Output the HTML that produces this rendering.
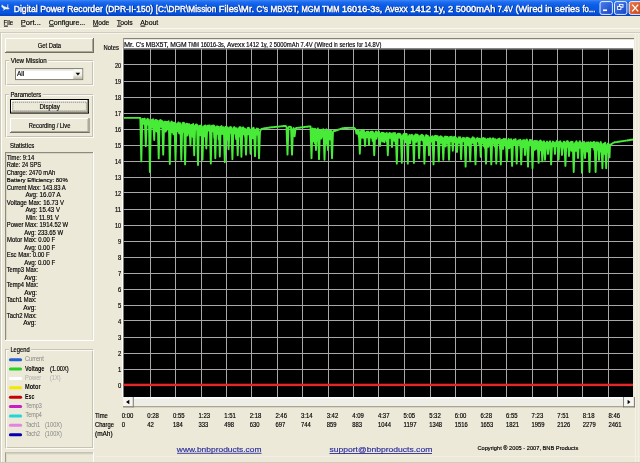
<!DOCTYPE html>
<html><head><meta charset="utf-8"><title>Digital Power Recorder</title>
<style>
html,body{margin:0;padding:0;background:#ECE9D8;overflow:hidden;}
svg{display:block;font-family:"Liberation Sans", sans-serif;will-change:transform;}
</style></head><body>
<svg width="640" height="463" viewBox="0 0 640 463">
<rect x="0" y="0" width="640" height="463" fill="#ECE9D8"/>
<defs>
<linearGradient id="tb" x1="0" y1="0" x2="0" y2="1">
<stop offset="0" stop-color="#3D86F5"/>
<stop offset="0.12" stop-color="#1E6CF0"/>
<stop offset="0.35" stop-color="#0A5CE6"/>
<stop offset="0.8" stop-color="#0756DE"/>
<stop offset="1" stop-color="#0440C0"/>
</linearGradient>
<linearGradient id="bb" x1="0" y1="0" x2="1" y2="1">
<stop offset="0" stop-color="#4A7FF0"/>
<stop offset="1" stop-color="#1442C0"/>
</linearGradient>
<linearGradient id="cb" x1="0" y1="0" x2="1" y2="1">
<stop offset="0" stop-color="#EE7A50"/>
<stop offset="1" stop-color="#C8400F"/>
</linearGradient>
</defs>
<rect x="0" y="0" width="640" height="16" fill="url(#tb)"/>
<path d="M1.9,4.3 L3.8,6.1 L7.1,7.3 L7.3,4.0 L8.3,4.3 L8.4,7.6 L9.9,8.7 L8.1,9.4 L5.6,9.3 L2.2,11.3 L3.7,8.9 L1.1,6.6 Z" fill="#F4F6FF" stroke="#0A2A90" stroke-width="0.4" stroke-opacity="0.6"/>
<text x="14.45" y="12.20" font-size="8.6" fill="#0A2480" textLength="89.25" lengthAdjust="spacingAndGlyphs" stroke="#0A2480" stroke-width="0.4">Digital Power Recorder</text>
<text x="106.20" y="12.20" font-size="8.6" fill="#0A2480" textLength="47.80" lengthAdjust="spacingAndGlyphs" stroke="#0A2480" stroke-width="0.4">(DPR-II-150)</text>
<text x="156.50" y="12.20" font-size="8.6" fill="#0A2480" textLength="60.60" lengthAdjust="spacingAndGlyphs" stroke="#0A2480" stroke-width="0.4">[C:\DPR\Mission</text>
<text x="219.60" y="12.20" font-size="8.6" fill="#0A2480" textLength="35.30" lengthAdjust="spacingAndGlyphs" stroke="#0A2480" stroke-width="0.4">Files\Mr.</text>
<text x="257.40" y="12.20" font-size="8.6" fill="#0A2480" textLength="42.40" lengthAdjust="spacingAndGlyphs" stroke="#0A2480" stroke-width="0.4">C's MBX5T,</text>
<text x="302.30" y="12.20" font-size="8.6" fill="#0A2480" textLength="38.00" lengthAdjust="spacingAndGlyphs" stroke="#0A2480" stroke-width="0.4">MGM TMM</text>
<text x="342.80" y="12.20" font-size="8.6" fill="#0A2480" textLength="40.40" lengthAdjust="spacingAndGlyphs" stroke="#0A2480" stroke-width="0.4">16016-3s,</text>
<text x="385.70" y="12.20" font-size="8.6" fill="#0A2480" textLength="22.80" lengthAdjust="spacingAndGlyphs" stroke="#0A2480" stroke-width="0.4">Avexx</text>
<text x="411.00" y="12.20" font-size="8.6" fill="#0A2480" textLength="43.00" lengthAdjust="spacingAndGlyphs" stroke="#0A2480" stroke-width="0.4">1412 1y, 2</text>
<text x="456.50" y="12.20" font-size="8.6" fill="#0A2480" textLength="39.60" lengthAdjust="spacingAndGlyphs" stroke="#0A2480" stroke-width="0.4">5000mAh</text>
<text x="498.60" y="12.20" font-size="8.6" fill="#0A2480" textLength="15.10" lengthAdjust="spacingAndGlyphs" stroke="#0A2480" stroke-width="0.4">7.4V</text>
<text x="516.20" y="12.20" font-size="8.6" fill="#0A2480" textLength="64.50" lengthAdjust="spacingAndGlyphs" stroke="#0A2480" stroke-width="0.4">(Wired in series</text>
<text x="583.20" y="12.20" font-size="8.6" fill="#0A2480" textLength="13.00" lengthAdjust="spacingAndGlyphs" stroke="#0A2480" stroke-width="0.4">fo...</text>
<text x="13.65" y="11.50" font-size="8.6" fill="#FFFFFF" textLength="89.25" lengthAdjust="spacingAndGlyphs" stroke="#FFFFFF" stroke-width="0.4">Digital Power Recorder</text>
<text x="105.40" y="11.50" font-size="8.6" fill="#FFFFFF" textLength="47.80" lengthAdjust="spacingAndGlyphs" stroke="#FFFFFF" stroke-width="0.4">(DPR-II-150)</text>
<text x="155.70" y="11.50" font-size="8.6" fill="#FFFFFF" textLength="60.60" lengthAdjust="spacingAndGlyphs" stroke="#FFFFFF" stroke-width="0.4">[C:\DPR\Mission</text>
<text x="218.80" y="11.50" font-size="8.6" fill="#FFFFFF" textLength="35.30" lengthAdjust="spacingAndGlyphs" stroke="#FFFFFF" stroke-width="0.4">Files\Mr.</text>
<text x="256.60" y="11.50" font-size="8.6" fill="#FFFFFF" textLength="42.40" lengthAdjust="spacingAndGlyphs" stroke="#FFFFFF" stroke-width="0.4">C's MBX5T,</text>
<text x="301.50" y="11.50" font-size="8.6" fill="#FFFFFF" textLength="38.00" lengthAdjust="spacingAndGlyphs" stroke="#FFFFFF" stroke-width="0.4">MGM TMM</text>
<text x="342.00" y="11.50" font-size="8.6" fill="#FFFFFF" textLength="40.40" lengthAdjust="spacingAndGlyphs" stroke="#FFFFFF" stroke-width="0.4">16016-3s,</text>
<text x="384.90" y="11.50" font-size="8.6" fill="#FFFFFF" textLength="22.80" lengthAdjust="spacingAndGlyphs" stroke="#FFFFFF" stroke-width="0.4">Avexx</text>
<text x="410.20" y="11.50" font-size="8.6" fill="#FFFFFF" textLength="43.00" lengthAdjust="spacingAndGlyphs" stroke="#FFFFFF" stroke-width="0.4">1412 1y, 2</text>
<text x="455.70" y="11.50" font-size="8.6" fill="#FFFFFF" textLength="39.60" lengthAdjust="spacingAndGlyphs" stroke="#FFFFFF" stroke-width="0.4">5000mAh</text>
<text x="497.80" y="11.50" font-size="8.6" fill="#FFFFFF" textLength="15.10" lengthAdjust="spacingAndGlyphs" stroke="#FFFFFF" stroke-width="0.4">7.4V</text>
<text x="515.40" y="11.50" font-size="8.6" fill="#FFFFFF" textLength="64.50" lengthAdjust="spacingAndGlyphs" stroke="#FFFFFF" stroke-width="0.4">(Wired in series</text>
<text x="582.40" y="11.50" font-size="8.6" fill="#FFFFFF" textLength="13.00" lengthAdjust="spacingAndGlyphs" stroke="#FFFFFF" stroke-width="0.4">fo...</text>
<rect x="600" y="1.6" width="12.4" height="12.8" rx="2" fill="url(#bb)" stroke="#FFFFFF" stroke-width="0.9"/>
<rect x="614.5" y="1.6" width="12.4" height="12.8" rx="2" fill="url(#bb)" stroke="#FFFFFF" stroke-width="0.9"/>
<rect x="603" y="9.4" width="4" height="1.7" fill="#FFFFFF"/>
<rect x="619.4" y="4.4" width="3.6" height="2.8" fill="none" stroke="#FFFFFF" stroke-width="0.9"/>
<rect x="617.6" y="6.4" width="3.3" height="3.0" fill="#1E50CC" stroke="#FFFFFF" stroke-width="0.9"/>
<rect x="629.2" y="1.6" width="13" height="12.8" rx="2" fill="url(#cb)" stroke="#FFFFFF" stroke-width="0.9"/>
<path d="M632.2,4.6 L638.2,11.4 M638.2,4.6 L632.2,11.4" stroke="#FFFFFF" stroke-width="1.4"/>
<rect x="0" y="16" width="640" height="13" fill="#ECE9D8"/>
<rect x="0" y="28" width="640" height="1" fill="#F8F7F2"/>
<text x="3.60" y="24.60" font-size="7.6" fill="#000" textLength="9.60" lengthAdjust="spacingAndGlyphs" stroke="#000" stroke-width="0.16">File</text>
<rect x="3.9" y="25.6" width="4.0" height="1" fill="#000"/>
<text x="20.80" y="24.60" font-size="7.6" fill="#000" textLength="20.10" lengthAdjust="spacingAndGlyphs" stroke="#000" stroke-width="0.16">Port...</text>
<rect x="21.1" y="25.6" width="4.600000000000001" height="1" fill="#000"/>
<text x="48.70" y="24.60" font-size="7.6" fill="#000" textLength="36.60" lengthAdjust="spacingAndGlyphs" stroke="#000" stroke-width="0.16">Configure...</text>
<rect x="49" y="25.6" width="5.0" height="1" fill="#000"/>
<text x="92.70" y="24.60" font-size="7.6" fill="#000" textLength="16.60" lengthAdjust="spacingAndGlyphs" stroke="#000" stroke-width="0.16">Mode</text>
<rect x="93" y="25.6" width="5.400000000000006" height="1" fill="#000"/>
<text x="116.70" y="24.60" font-size="7.6" fill="#000" textLength="16.10" lengthAdjust="spacingAndGlyphs" stroke="#000" stroke-width="0.16">Tools</text>
<rect x="117" y="25.6" width="4.400000000000006" height="1" fill="#000"/>
<text x="140.20" y="24.60" font-size="7.6" fill="#000" textLength="18.10" lengthAdjust="spacingAndGlyphs" stroke="#000" stroke-width="0.16">About</text>
<rect x="140.5" y="25.6" width="4.800000000000011" height="1" fill="#000"/>
<rect x="0" y="32" width="640" height="1" fill="#D0CDBE"/>
<rect x="0" y="33" width="640" height="1" fill="#F6F4EC"/>
<rect x="0" y="32" width="1" height="431" fill="#CFCBBB"/>
<rect x="1" y="33" width="1" height="430" fill="#FFFFFF"/>
<rect x="635" y="33" width="1" height="430" fill="#F4F2E8"/>
<rect x="638" y="33" width="1" height="430" fill="#F2F0E6"/>
<rect x="5" y="38" width="89" height="15" fill="#ECE9D8"/>
<rect x="5" y="38" width="89" height="1" fill="#FFFFFF"/>
<rect x="5" y="38" width="1" height="15" fill="#FFFFFF"/>
<rect x="5" y="52" width="89" height="1" fill="#716F64"/>
<rect x="93" y="38" width="1" height="15" fill="#716F64"/>
<rect x="6" y="51" width="87" height="1" fill="#ACA899"/>
<rect x="92" y="39" width="1" height="13" fill="#ACA899"/>
<text x="37.80" y="47.50" font-size="6.4" fill="#000" textLength="23.30" lengthAdjust="spacingAndGlyphs" stroke="#000" stroke-width="0.16">Get Data</text>
<rect x="5.5" y="60.5" width="87" height="24" fill="none" stroke="#C6C3B4" stroke-width="1"/>
<rect x="6.5" y="61.5" width="87" height="24" fill="none" stroke="#FFFFFF" stroke-width="1" opacity="0.8"/>
<rect x="9.3" y="57" width="38.9" height="6" fill="#ECE9D8"/>
<text x="10.80" y="63.40" font-size="6.4" fill="#000" textLength="35.90" lengthAdjust="spacingAndGlyphs" stroke="#000" stroke-width="0.16">View Mission</text>
<rect x="15" y="68" width="68" height="12" fill="#FFFFFF"/>
<rect x="15.5" y="68.6" width="67.2" height="11.0" fill="none" stroke="#7E7B6E" stroke-width="1"/>
<rect x="16" y="69.6" width="66" height="0.8" fill="#D4D1C4"/>
<linearGradient id="cbtn" x1="0" y1="0" x2="0" y2="1"><stop offset="0" stop-color="#FAFAF6"/><stop offset="0.6" stop-color="#F0EFE8"/><stop offset="1" stop-color="#B8B5A6"/></linearGradient>
<rect x="73.3" y="69.3" width="8.9" height="9.8" fill="url(#cbtn)"/>
<path d="M75.6,72.8 L80.2,72.8 L77.9,75.6 Z" fill="#000"/>
<text x="16.90" y="76.30" font-size="6.4" fill="#000" textLength="7.30" lengthAdjust="spacingAndGlyphs" stroke="#000" stroke-width="0.16">All</text>
<rect x="5.5" y="94.5" width="87" height="42" fill="none" stroke="#C6C3B4" stroke-width="1"/>
<rect x="6.5" y="95.5" width="87" height="42" fill="none" stroke="#FFFFFF" stroke-width="1" opacity="0.8"/>
<rect x="8.9" y="91" width="33.8" height="6" fill="#ECE9D8"/>
<text x="10.40" y="97.20" font-size="6.4" fill="#000" textLength="30.80" lengthAdjust="spacingAndGlyphs" stroke="#000" stroke-width="0.16">Parameters</text>
<rect x="10" y="99" width="79" height="14" fill="#ECE9D8"/>
<rect x="10.5" y="99.5" width="78" height="13.6" fill="none" stroke="#000" stroke-width="1"/>
<rect x="11" y="100.2" width="77" height="1" fill="#FFFFFF"/>
<rect x="11.2" y="100" width="1" height="12" fill="#FFFFFF"/>
<rect x="11" y="111.6" width="77" height="1" fill="#716F64"/>
<rect x="87.3" y="100" width="1" height="12" fill="#716F64"/>
<rect x="12.8" y="102.2" width="73.6" height="8.6" fill="none" stroke="#333" stroke-width="0.6" stroke-dasharray="1,1"/>
<text x="39.60" y="109.00" font-size="6.4" fill="#000" textLength="20.20" lengthAdjust="spacingAndGlyphs" stroke="#000" stroke-width="0.16">Display</text>
<rect x="10" y="118" width="79.5" height="15" fill="#ECE9D8"/>
<rect x="10" y="118" width="79.5" height="1" fill="#FFFFFF"/>
<rect x="10" y="118" width="1" height="15" fill="#FFFFFF"/>
<rect x="10" y="132" width="79.5" height="1" fill="#716F64"/>
<rect x="88.5" y="118" width="1" height="15" fill="#716F64"/>
<rect x="11" y="131" width="77.5" height="1" fill="#ACA899"/>
<rect x="87.5" y="119" width="1" height="13" fill="#ACA899"/>
<text x="28.70" y="128.30" font-size="6.4" fill="#000" textLength="41.80" lengthAdjust="spacingAndGlyphs" stroke="#000" stroke-width="0.16">Recording / Live</text>
<text x="10.00" y="147.90" font-size="6.4" fill="#000" textLength="24.20" lengthAdjust="spacingAndGlyphs" stroke="#000" stroke-width="0.16">Statistics</text>
<rect x="5" y="152" width="89" height="1" fill="#8E8B7C"/>
<rect x="5" y="152" width="1" height="188" fill="#8E8B7C"/>
<rect x="6" y="153" width="87" height="1" fill="#D8D5C8"/>
<rect x="6" y="153" width="1" height="186" fill="#D8D5C8"/>
<rect x="5" y="340" width="89" height="1" fill="#FFFFFF"/>
<rect x="93" y="152" width="1" height="189" fill="#FFFFFF"/>
<rect x="92" y="153" width="1" height="187" fill="#E2DFD2"/>
<text x="7.00" y="159.80" font-size="6.4" fill="#000" textLength="27.10" lengthAdjust="spacingAndGlyphs" stroke="#000" stroke-width="0.16">Time: 9:14</text>
<text x="6.80" y="167.31" font-size="6.4" fill="#000" textLength="34.30" lengthAdjust="spacingAndGlyphs" stroke="#000" stroke-width="0.16">Rate: 24 SPS</text>
<text x="6.80" y="174.82" font-size="6.4" fill="#000" textLength="48.40" lengthAdjust="spacingAndGlyphs" stroke="#000" stroke-width="0.16">Charge: 2470 mAh</text>
<text x="6.80" y="182.33" font-size="6.0" fill="#000" textLength="60.90" lengthAdjust="spacingAndGlyphs" stroke="#000" stroke-width="0.16">Battery Efficiency: 80%</text>
<text x="6.80" y="189.84" font-size="6.4" fill="#000" textLength="59.00" lengthAdjust="spacingAndGlyphs" stroke="#000" stroke-width="0.16">Current Max: 143.83 A</text>
<text x="25.40" y="197.35" font-size="6.4" fill="#000" textLength="35.40" lengthAdjust="spacingAndGlyphs" stroke="#000" stroke-width="0.16">Avg: 16.07 A</text>
<text x="6.80" y="204.86" font-size="6.4" fill="#000" textLength="57.15" lengthAdjust="spacingAndGlyphs" stroke="#000" stroke-width="0.16">Voltage Max: 16.73 V</text>
<text x="25.40" y="212.37" font-size="6.4" fill="#000" textLength="34.55" lengthAdjust="spacingAndGlyphs" stroke="#000" stroke-width="0.16">Avg: 15.43 V</text>
<text x="26.05" y="219.88" font-size="6.4" fill="#000" textLength="32.90" lengthAdjust="spacingAndGlyphs" stroke="#000" stroke-width="0.16">Min: 11.91 V</text>
<text x="6.70" y="227.39" font-size="6.4" fill="#000" textLength="61.50" lengthAdjust="spacingAndGlyphs" stroke="#000" stroke-width="0.16">Power Max: 1914.52 W</text>
<text x="24.20" y="234.90" font-size="6.4" fill="#000" textLength="39.00" lengthAdjust="spacingAndGlyphs" stroke="#000" stroke-width="0.16">Avg: 233.65 W</text>
<text x="7.05" y="242.41" font-size="6.4" fill="#000" textLength="48.15" lengthAdjust="spacingAndGlyphs" stroke="#000" stroke-width="0.16">Motor Max: 0.00 F</text>
<text x="24.20" y="249.92" font-size="6.4" fill="#000" textLength="31.00" lengthAdjust="spacingAndGlyphs" stroke="#000" stroke-width="0.16">Avg: 0.00 F</text>
<text x="6.70" y="257.43" font-size="6.4" fill="#000" textLength="42.90" lengthAdjust="spacingAndGlyphs" stroke="#000" stroke-width="0.16">Esc Max: 0.00 F</text>
<text x="24.20" y="264.94" font-size="6.4" fill="#000" textLength="31.00" lengthAdjust="spacingAndGlyphs" stroke="#000" stroke-width="0.16">Avg: 0.00 F</text>
<text x="6.70" y="272.45" font-size="6.4" fill="#000" textLength="31.50" lengthAdjust="spacingAndGlyphs" stroke="#000" stroke-width="0.16">Temp3 Max:</text>
<text x="24.20" y="279.96" font-size="6.4" fill="#000" textLength="12.90" lengthAdjust="spacingAndGlyphs" stroke="#000" stroke-width="0.16">Avg:</text>
<text x="6.70" y="287.47" font-size="6.4" fill="#000" textLength="31.50" lengthAdjust="spacingAndGlyphs" stroke="#000" stroke-width="0.16">Temp4 Max:</text>
<text x="24.20" y="294.98" font-size="6.4" fill="#000" textLength="12.90" lengthAdjust="spacingAndGlyphs" stroke="#000" stroke-width="0.16">Avg:</text>
<text x="6.70" y="302.49" font-size="6.4" fill="#000" textLength="29.75" lengthAdjust="spacingAndGlyphs" stroke="#000" stroke-width="0.16">Tach1 Max:</text>
<text x="23.20" y="310.00" font-size="6.4" fill="#000" textLength="12.90" lengthAdjust="spacingAndGlyphs" stroke="#000" stroke-width="0.16">Avg:</text>
<text x="6.80" y="317.51" font-size="6.4" fill="#000" textLength="29.90" lengthAdjust="spacingAndGlyphs" stroke="#000" stroke-width="0.16">Tach2 Max:</text>
<text x="23.20" y="325.02" font-size="6.4" fill="#000" textLength="12.90" lengthAdjust="spacingAndGlyphs" stroke="#000" stroke-width="0.16">Avg:</text>
<rect x="5.5" y="349.5" width="87" height="98" fill="none" stroke="#C6C3B4" stroke-width="1"/>
<rect x="6.5" y="350.5" width="87" height="98" fill="none" stroke="#FFFFFF" stroke-width="1" opacity="0.8"/>
<rect x="8.9" y="346" width="22.2" height="6" fill="#ECE9D8"/>
<text x="10.40" y="351.70" font-size="6.4" fill="#000" textLength="19.20" lengthAdjust="spacingAndGlyphs" stroke="#000" stroke-width="0.16">Legend</text>
<rect x="8.9" y="358.20" width="13.2" height="3.0" rx="1.5" fill="#2262D2"/>
<text x="25.00" y="361.30" font-size="6.4" fill="#828282" textLength="18.75" lengthAdjust="spacingAndGlyphs">Current</text>
<rect x="8.9" y="367.58" width="13.2" height="3.0" rx="1.5" fill="#28D028"/>
<text x="25.00" y="370.63" font-size="6.4" fill="#000" font-weight="bold" textLength="19.40" lengthAdjust="spacingAndGlyphs">Voltage</text>
<text x="50.00" y="370.63" font-size="6.4" fill="#000" textLength="18.75" lengthAdjust="spacingAndGlyphs" stroke="#000" stroke-width="0.16">(1.00X)</text>
<rect x="8.9" y="376.96" width="13.2" height="3.0" rx="1.5" fill="#FFFFFF"/>
<text x="25.00" y="379.96" font-size="6.4" fill="#ACACAC" textLength="16.25" lengthAdjust="spacingAndGlyphs">Power</text>
<text x="50.00" y="379.96" font-size="6.4" fill="#ACACAC" textLength="10.60" lengthAdjust="spacingAndGlyphs">(1X)</text>
<rect x="8.9" y="386.34" width="13.2" height="3.0" rx="1.5" fill="#F5E800"/>
<text x="25.00" y="389.29" font-size="6.4" fill="#000" font-weight="bold" textLength="15.60" lengthAdjust="spacingAndGlyphs">Motor</text>
<rect x="8.9" y="395.72" width="13.2" height="3.0" rx="1.5" fill="#C80000"/>
<text x="25.00" y="398.62" font-size="6.4" fill="#000" font-weight="bold" textLength="9.40" lengthAdjust="spacingAndGlyphs">Esc</text>
<rect x="8.9" y="405.10" width="13.2" height="3.0" rx="1.5" fill="#C81EC8"/>
<text x="25.60" y="407.95" font-size="6.4" fill="#828282" textLength="16.30" lengthAdjust="spacingAndGlyphs">Temp3</text>
<rect x="8.9" y="414.48" width="13.2" height="3.0" rx="1.5" fill="#1ED8D8"/>
<text x="25.60" y="417.28" font-size="6.4" fill="#828282" textLength="16.30" lengthAdjust="spacingAndGlyphs">Temp4</text>
<rect x="8.9" y="423.86" width="13.2" height="3.0" rx="1.5" fill="#E284E2"/>
<text x="25.60" y="426.61" font-size="6.4" fill="#828282" textLength="14.40" lengthAdjust="spacingAndGlyphs">Tach1</text>
<text x="45.00" y="426.61" font-size="6.4" fill="#828282" textLength="16.90" lengthAdjust="spacingAndGlyphs">(100X)</text>
<rect x="8.9" y="433.24" width="13.2" height="3.0" rx="1.5" fill="#0000B0"/>
<text x="25.60" y="435.94" font-size="6.4" fill="#828282" textLength="14.40" lengthAdjust="spacingAndGlyphs">Tach2</text>
<text x="45.00" y="435.94" font-size="6.4" fill="#828282" textLength="16.90" lengthAdjust="spacingAndGlyphs">(100X)</text>
<rect x="5" y="452.5" width="89" height="1" fill="#A09D8E"/>
<rect x="5" y="452.5" width="1" height="10.5" fill="#A09D8E"/>
<rect x="6" y="453.5" width="87" height="1" fill="#DEDBCE"/>
<rect x="6" y="453.5" width="1" height="9.5" fill="#DEDBCE"/>
<rect x="93" y="452" width="1" height="11" fill="#FFFFFF"/>
<text x="103.60" y="49.90" font-size="6.6" fill="#000" textLength="15.30" lengthAdjust="spacingAndGlyphs" stroke="#000" stroke-width="0.16">Notes</text>
<rect x="123" y="38" width="511" height="10.5" fill="#FFFFFF"/>
<rect x="123" y="38" width="511" height="1.2" fill="#858274"/>
<rect x="123" y="38" width="1" height="10.5" fill="#9A978A"/>
<text x="124.00" y="46.50" font-size="6.4" fill="#000" textLength="10.15" lengthAdjust="spacingAndGlyphs" stroke="#000" stroke-width="0.16">Mr.</text>
<text x="135.85" y="46.50" font-size="6.4" fill="#000" textLength="8.30" lengthAdjust="spacingAndGlyphs" stroke="#000" stroke-width="0.16">C's</text>
<text x="145.85" y="46.50" font-size="6.4" fill="#000" textLength="22.65" lengthAdjust="spacingAndGlyphs" stroke="#000" stroke-width="0.16">MBX5T,</text>
<text x="170.20" y="46.50" font-size="6.4" fill="#000" textLength="16.45" lengthAdjust="spacingAndGlyphs" stroke="#000" stroke-width="0.16">MGM</text>
<text x="188.35" y="46.50" font-size="6.4" fill="#000" textLength="10.65" lengthAdjust="spacingAndGlyphs" stroke="#000" stroke-width="0.16">TMM</text>
<text x="200.70" y="46.50" font-size="6.4" fill="#000" textLength="24.60" lengthAdjust="spacingAndGlyphs" stroke="#000" stroke-width="0.16">16016-3s,</text>
<text x="227.00" y="46.50" font-size="6.4" fill="#000" textLength="17.65" lengthAdjust="spacingAndGlyphs" stroke="#000" stroke-width="0.16">Avexx</text>
<text x="246.35" y="46.50" font-size="6.4" fill="#000" textLength="12.65" lengthAdjust="spacingAndGlyphs" stroke="#000" stroke-width="0.16">1412</text>
<text x="260.70" y="46.50" font-size="6.4" fill="#000" textLength="7.10" lengthAdjust="spacingAndGlyphs" stroke="#000" stroke-width="0.16">1y,</text>
<text x="269.50" y="46.50" font-size="6.4" fill="#000" textLength="2.65" lengthAdjust="spacingAndGlyphs" stroke="#000" stroke-width="0.16">2</text>
<text x="273.85" y="46.50" font-size="6.4" fill="#000" textLength="25.05" lengthAdjust="spacingAndGlyphs" stroke="#000" stroke-width="0.16">5000mAh</text>
<text x="300.60" y="46.50" font-size="6.4" fill="#000" textLength="12.05" lengthAdjust="spacingAndGlyphs" stroke="#000" stroke-width="0.16">7.4V</text>
<text x="314.35" y="46.50" font-size="6.4" fill="#000" textLength="18.05" lengthAdjust="spacingAndGlyphs" stroke="#000" stroke-width="0.16">(Wired</text>
<text x="334.10" y="46.50" font-size="6.4" fill="#000" textLength="3.60" lengthAdjust="spacingAndGlyphs" stroke="#000" stroke-width="0.16">in</text>
<text x="339.40" y="46.50" font-size="6.4" fill="#000" textLength="15.90" lengthAdjust="spacingAndGlyphs" stroke="#000" stroke-width="0.16">series</text>
<text x="357.00" y="46.50" font-size="6.4" fill="#000" textLength="5.80" lengthAdjust="spacingAndGlyphs" stroke="#000" stroke-width="0.16">for</text>
<text x="364.50" y="46.50" font-size="6.4" fill="#000" textLength="16.90" lengthAdjust="spacingAndGlyphs" stroke="#000" stroke-width="0.16">14.8V)</text>
<rect x="122" y="48.5" width="1.5" height="348.5" fill="#FFFFFF"/>
<rect x="123.5" y="48.5" width="509.5" height="348.5" fill="#000000"/>
<rect x="123.5" y="48.3" width="509.5" height="1.3" fill="#8E8E8E"/>
<path d="M123.5,384.50H633 M123.5,369.50H633 M123.5,353.50H633 M123.5,337.50H633 M123.5,320.50H633 M123.5,305.50H633 M123.5,289.50H633 M123.5,273.50H633 M123.5,257.50H633 M123.5,241.50H633 M123.5,225.50H633 M123.5,209.50H633 M123.5,192.50H633 M123.5,177.50H633 M123.5,161.50H633 M123.5,145.50H633 M123.5,129.50H633 M123.5,113.50H633 M123.5,97.50H633 M123.5,81.50H633 M123.5,64.50H633 M150.50,48.5V397 M175.50,48.5V397 M201.50,48.5V397 M226.50,48.5V397 M251.50,48.5V397 M277.50,48.5V397 M302.50,48.5V397 M328.50,48.5V397 M353.50,48.5V397 M378.50,48.5V397 M404.50,48.5V397 M430.50,48.5V397 M455.50,48.5V397 M481.50,48.5V397 M506.50,48.5V397 M532.50,48.5V397 M557.50,48.5V397 M582.50,48.5V397 M608.50,48.5V397" stroke="#A8A8A8" stroke-width="1" fill="none"/>
<text x="121.20" y="387.80" font-size="6.4" fill="#000" text-anchor="end" textLength="3.30" lengthAdjust="spacingAndGlyphs" stroke="#000" stroke-width="0.16">0</text>
<text x="121.20" y="371.80" font-size="6.4" fill="#000" text-anchor="end" textLength="3.30" lengthAdjust="spacingAndGlyphs" stroke="#000" stroke-width="0.16">1</text>
<text x="121.20" y="355.80" font-size="6.4" fill="#000" text-anchor="end" textLength="3.30" lengthAdjust="spacingAndGlyphs" stroke="#000" stroke-width="0.16">2</text>
<text x="121.20" y="339.80" font-size="6.4" fill="#000" text-anchor="end" textLength="3.30" lengthAdjust="spacingAndGlyphs" stroke="#000" stroke-width="0.16">3</text>
<text x="121.20" y="323.80" font-size="6.4" fill="#000" text-anchor="end" textLength="3.30" lengthAdjust="spacingAndGlyphs" stroke="#000" stroke-width="0.16">4</text>
<text x="121.20" y="307.80" font-size="6.4" fill="#000" text-anchor="end" textLength="3.30" lengthAdjust="spacingAndGlyphs" stroke="#000" stroke-width="0.16">5</text>
<text x="121.20" y="291.80" font-size="6.4" fill="#000" text-anchor="end" textLength="3.30" lengthAdjust="spacingAndGlyphs" stroke="#000" stroke-width="0.16">6</text>
<text x="121.20" y="275.80" font-size="6.4" fill="#000" text-anchor="end" textLength="3.30" lengthAdjust="spacingAndGlyphs" stroke="#000" stroke-width="0.16">7</text>
<text x="121.20" y="259.80" font-size="6.4" fill="#000" text-anchor="end" textLength="3.30" lengthAdjust="spacingAndGlyphs" stroke="#000" stroke-width="0.16">8</text>
<text x="121.20" y="243.80" font-size="6.4" fill="#000" text-anchor="end" textLength="3.30" lengthAdjust="spacingAndGlyphs" stroke="#000" stroke-width="0.16">9</text>
<text x="121.20" y="227.80" font-size="6.4" fill="#000" text-anchor="end" textLength="6.20" lengthAdjust="spacingAndGlyphs" stroke="#000" stroke-width="0.16">10</text>
<text x="121.20" y="211.80" font-size="6.4" fill="#000" text-anchor="end" textLength="6.20" lengthAdjust="spacingAndGlyphs" stroke="#000" stroke-width="0.16">11</text>
<text x="121.20" y="195.80" font-size="6.4" fill="#000" text-anchor="end" textLength="6.20" lengthAdjust="spacingAndGlyphs" stroke="#000" stroke-width="0.16">12</text>
<text x="121.20" y="179.80" font-size="6.4" fill="#000" text-anchor="end" textLength="6.20" lengthAdjust="spacingAndGlyphs" stroke="#000" stroke-width="0.16">13</text>
<text x="121.20" y="163.80" font-size="6.4" fill="#000" text-anchor="end" textLength="6.20" lengthAdjust="spacingAndGlyphs" stroke="#000" stroke-width="0.16">14</text>
<text x="121.20" y="147.80" font-size="6.4" fill="#000" text-anchor="end" textLength="6.20" lengthAdjust="spacingAndGlyphs" stroke="#000" stroke-width="0.16">15</text>
<text x="121.20" y="131.80" font-size="6.4" fill="#000" text-anchor="end" textLength="6.20" lengthAdjust="spacingAndGlyphs" stroke="#000" stroke-width="0.16">16</text>
<text x="121.20" y="115.80" font-size="6.4" fill="#000" text-anchor="end" textLength="6.20" lengthAdjust="spacingAndGlyphs" stroke="#000" stroke-width="0.16">17</text>
<text x="121.20" y="99.80" font-size="6.4" fill="#000" text-anchor="end" textLength="6.20" lengthAdjust="spacingAndGlyphs" stroke="#000" stroke-width="0.16">18</text>
<text x="121.20" y="83.80" font-size="6.4" fill="#000" text-anchor="end" textLength="6.20" lengthAdjust="spacingAndGlyphs" stroke="#000" stroke-width="0.16">19</text>
<text x="121.20" y="67.80" font-size="6.4" fill="#000" text-anchor="end" textLength="6.20" lengthAdjust="spacingAndGlyphs" stroke="#000" stroke-width="0.16">20</text>
<path d="M124.0,117.9 L125.0,117.9 L126.0,117.9 L127.0,117.9 L128.0,117.9 L129.0,117.9 L130.0,117.9 L131.0,117.9 L132.0,117.9 L133.0,117.9 L134.0,117.9 L135.0,117.9 L136.0,117.9 L137.0,117.9 L138.0,117.9 L139.0,117.9 L140.0,117.9 L140.3,118.0 L141.3,161.4 L142.3,118.9 L143.1,119.2 L143.7,123.9 L144.3,118.8 L144.9,123.9 L144.8,118.6 L145.8,146.3 L146.8,120.0 L147.6,118.7 L148.2,124.5 L148.7,120.0 L149.3,124.9 L148.9,119.8 L149.9,172.0 L150.9,121.4 L151.7,119.9 L152.3,127.5 L153.1,119.2 L153.7,131.6 L153.2,119.7 L154.2,140.0 L155.2,120.2 L156.0,120.0 L156.6,131.5 L157.0,120.5 L157.6,130.1 L157.7,120.7 L158.7,158.4 L159.7,120.6 L160.5,120.1 L161.1,126.9 L161.7,120.8 L162.3,127.9 L162.2,121.1 L163.2,154.6 L164.2,121.7 L165.0,121.8 L165.6,131.6 L166.0,121.6 L166.6,130.3 L167.4,122.0 L168.0,128.5 L168.7,121.3 L169.3,129.7 L168.8,121.6 L169.8,164.0 L170.8,122.9 L171.6,121.5 L172.2,132.2 L172.9,122.5 L173.5,134.2 L173.9,122.9 L174.5,131.9 L174.5,122.7 L175.5,160.0 L176.5,124.3 L177.3,123.6 L177.9,131.3 L178.5,122.4 L179.1,133.3 L179.8,124.0 L180.4,134.5 L180.3,123.2 L181.3,159.8 L182.3,124.6 L183.1,122.7 L183.7,131.8 L184.1,123.0 L184.7,128.5 L184.1,123.3 L185.1,164.4 L186.1,124.1 L186.9,123.7 L187.5,135.6 L187.8,123.9 L188.4,133.0 L189.2,124.6 L189.8,135.8 L189.4,124.2 L190.4,145.5 L191.4,124.9 L192.2,125.0 L192.8,136.9 L193.2,124.0 L193.8,130.8 L193.2,124.7 L194.2,155.3 L195.2,125.7 L196.0,124.4 L196.6,129.2 L197.0,124.8 L198.0,165.1 L199.0,126.0 L199.8,125.8 L200.4,135.3 L201.0,125.4 L201.6,135.2 L201.5,125.9 L202.5,159.8 L203.5,126.7 L204.3,126.0 L204.9,136.5 L205.3,125.5 L206.3,148.5 L207.3,125.7 L208.1,126.0 L208.7,130.6 L209.0,125.4 L209.6,131.5 L209.8,125.5 L210.8,163.6 L211.8,125.8 L212.6,125.6 L213.2,131.3 L213.7,125.4 L214.3,137.9 L214.3,125.9 L215.3,158.3 L216.3,126.7 L217.1,126.2 L217.7,133.9 L218.1,127.1 L218.7,139.3 L218.8,126.7 L219.8,156.5 L220.8,126.7 L221.6,126.1 L222.2,134.0 L222.6,127.4 L223.2,132.5 L223.5,127.6 L224.1,135.7 L223.8,127.1 L224.8,162.1 L225.8,126.8 L226.6,127.1 L227.2,139.6 L227.6,127.5 L228.6,149.3 L229.6,127.5 L230.4,127.0 L231.0,133.0 L231.4,127.5 L232.4,159.1 L233.4,128.7 L234.2,127.1 L234.8,133.6 L235.5,128.3 L236.1,139.0 L236.7,128.1 L237.7,155.3 L238.7,128.9 L239.5,127.2 L240.1,136.4 L240.4,127.3 L241.4,156.8 L242.4,127.7 L243.2,127.5 L243.8,134.4 L244.4,128.7 L245.0,136.1 L245.0,128.8 L246.0,154.6 L247.0,129.8 L247.8,127.9 L248.4,134.3 L248.8,127.7 L249.4,134.3 L249.5,128.9 L250.5,153.8 L251.5,129.8 L252.3,128.4 L252.9,138.3 L253.6,127.8 L254.2,138.4 L254.0,129.0 L255.0,156.1 L256.0,129.9 L256.8,128.6 L257.4,134.5 L258.0,128.6 L259.0,158.3 L260.0,131.8 L260.8,129.6 L261.8,128.9 L262.8,128.7 L263.8,128.5 L264.8,128.3 L265.8,128.2 L266.8,128.0 L267.8,127.9 L268.8,127.7 L269.8,127.5 L270.8,127.4 L271.8,127.3 L272.8,127.2 L273.8,127.1 L274.8,127.0 L275.8,126.9 L276.8,126.8 L277.8,126.7 L278.8,126.6 L279.8,126.5 L280.8,126.4 L281.8,126.3 L282.8,126.2 L283.8,126.0 L284.8,125.9 L285.8,126.0 L286.5,127.0 L287.5,154.6 L288.5,127.2 L289.3,126.6 L290.3,126.8 L291.0,127.1 L292.0,154.6 L293.0,129.2 L293.6,128.0 L294.6,136.4 L295.6,128.4 L296.4,128.0 L297.4,127.9 L298.4,127.8 L299.4,127.7 L300.4,127.5 L301.4,127.4 L302.4,127.3 L303.4,127.2 L304.4,127.0 L305.4,126.9 L306.4,126.8 L307.4,126.7 L308.4,126.5 L309.4,126.4 L310.4,126.4 L310.5,126.4 L311.5,158.3 L312.5,128.5 L313.3,129.1 L313.9,141.4 L314.3,129.1 L314.9,143.2 L315.0,128.6 L316.0,150.0 L317.0,129.8 L317.8,128.4 L318.4,134.2 L318.0,129.3 L319.0,159.1 L320.0,130.1 L320.8,130.0 L321.4,138.6 L322.1,130.0 L322.7,136.6 L323.2,129.2 L323.8,137.0 L323.5,129.5 L324.5,159.8 L325.5,130.5 L326.3,129.3 L326.9,143.9 L327.0,130.1 L328.0,150.0 L329.0,131.2 L329.8,131.0 L330.4,139.5 L331.0,130.6 L332.0,158.3 L333.0,131.6 L333.8,130.8 L334.8,131.0 L335.8,130.6 L336.8,130.3 L337.8,129.9 L338.8,129.5 L339.8,129.2 L340.8,128.8 L341.8,128.5 L342.8,128.1 L343.8,128.1 L344.8,128.0 L345.8,128.0 L346.8,128.0 L347.8,128.0 L348.8,127.9 L349.8,127.9 L350.8,127.9 L351.8,127.9 L352.8,127.8 L353.8,127.8 L354.8,128.3 L355.8,130.1 L356.4,133.5 L356.9,130.0 L357.5,133.8 L358.2,130.0 L358.8,136.9 L358.8,130.8 L359.8,153.8 L360.8,131.2 L361.6,130.8 L362.2,137.7 L362.9,130.2 L363.5,137.8 L363.9,130.6 L364.5,139.3 L364.0,131.2 L365.0,146.0 L366.0,132.4 L366.8,131.8 L367.4,137.3 L368.0,131.4 L369.0,145.0 L370.0,132.2 L370.8,131.7 L371.4,137.7 L372.0,131.5 L372.6,140.9 L373.2,132.2 L374.2,155.3 L375.2,133.4 L376.0,131.4 L376.6,138.7 L377.4,132.5 L378.0,136.1 L378.3,131.9 L378.9,135.8 L379.0,131.7 L380.0,146.0 L381.0,133.4 L381.8,132.8 L382.4,141.5 L382.8,132.8 L383.4,140.1 L383.7,133.2 L384.3,142.2 L384.8,133.4 L385.4,138.6 L385.9,133.6 L386.5,141.5 L386.8,132.9 L387.8,155.3 L388.8,133.9 L389.6,132.9 L390.2,137.7 L390.7,133.6 L391.3,136.7 L391.0,133.4 L392.0,147.0 L393.0,133.3 L393.8,133.3 L394.4,140.9 L395.0,133.0 L395.6,143.4 L395.8,134.5 L396.8,163.6 L397.8,134.0 L398.6,133.7 L399.2,137.6 L399.9,133.8 L400.5,138.3 L400.8,134.9 L401.8,162.9 L402.8,135.8 L403.6,134.0 L404.2,138.7 L405.0,134.6 L405.6,142.4 L405.9,133.8 L406.5,142.3 L406.8,134.2 L407.8,163.6 L408.8,136.4 L409.6,135.0 L410.2,143.3 L410.5,135.4 L411.1,138.6 L411.9,134.8 L412.5,140.4 L412.9,135.7 L413.9,162.9 L414.9,135.4 L415.7,134.5 L416.3,141.9 L416.7,134.6 L417.3,139.6 L417.6,134.8 L418.2,140.6 L418.1,135.8 L419.1,158.3 L420.1,135.8 L420.9,135.5 L421.5,139.9 L422.0,134.7 L422.6,140.4 L422.9,135.9 L423.5,142.5 L423.4,135.7 L424.4,163.6 L425.4,137.4 L426.2,135.1 L426.8,144.4 L427.3,135.8 L427.9,144.6 L428.0,136.0 L429.0,155.3 L430.0,137.2 L430.8,136.8 L431.4,141.6 L432.1,136.5 L432.7,143.6 L432.5,136.1 L433.5,164.4 L434.5,136.2 L435.3,135.7 L435.9,140.1 L436.6,136.0 L437.2,140.8 L437.5,137.0 L438.1,145.4 L437.8,136.3 L438.8,161.4 L439.8,136.9 L440.6,136.3 L441.2,142.9 L441.6,136.6 L442.2,141.7 L442.3,137.5 L443.3,159.8 L444.3,137.8 L445.1,136.5 L445.7,146.5 L446.2,136.7 L446.8,140.3 L447.2,137.0 L447.8,143.6 L448.0,137.2 L449.0,159.8 L450.0,137.0 L450.8,136.8 L451.4,141.1 L451.8,136.8 L452.8,150.8 L453.8,137.2 L454.6,137.0 L455.2,142.2 L455.8,137.4 L456.4,145.6 L456.0,137.8 L457.0,152.0 L458.0,139.0 L458.8,137.3 L459.4,142.9 L460.1,137.2 L461.1,159.1 L462.1,138.8 L462.9,137.8 L463.5,141.2 L464.2,138.3 L464.8,145.0 L464.6,138.2 L465.6,166.6 L466.6,137.8 L467.4,137.8 L468.0,144.3 L468.7,138.3 L469.3,146.5 L469.2,138.5 L470.2,161.4 L471.2,139.0 L472.0,138.2 L472.6,142.7 L472.9,137.3 L473.5,143.6 L473.9,138.5 L474.5,144.9 L474.5,138.3 L475.5,164.4 L476.5,139.2 L477.3,138.1 L477.9,141.4 L478.6,138.6 L479.2,144.7 L479.7,138.6 L480.7,156.8 L481.7,138.3 L482.5,138.7 L483.1,143.3 L483.4,138.0 L484.0,146.4 L484.4,138.8 L485.0,148.1 L485.0,138.5 L486.0,163.6 L487.0,139.3 L487.8,138.9 L488.4,146.9 L489.0,138.9 L489.6,142.5 L490.0,138.3 L490.6,146.9 L490.3,139.0 L491.3,164.4 L492.3,138.7 L493.1,138.2 L493.7,143.9 L494.3,139.2 L494.9,146.6 L495.3,139.1 L496.3,163.6 L497.3,139.8 L498.1,139.1 L498.7,143.2 L499.4,138.7 L500.0,148.8 L499.8,138.7 L500.8,164.4 L501.8,140.0 L502.6,139.8 L503.2,148.9 L503.7,138.9 L504.3,144.0 L505.1,138.9 L505.7,146.4 L505.8,139.6 L506.8,161.4 L507.8,141.2 L508.6,138.9 L509.2,148.1 L509.8,140.1 L510.4,147.4 L510.8,140.2 L511.4,146.0 L511.1,139.1 L512.1,165.9 L513.1,140.4 L513.9,139.6 L514.5,144.9 L514.9,139.4 L515.5,145.0 L515.7,139.2 L516.7,163.6 L517.7,141.1 L518.5,140.3 L519.1,143.9 L519.9,140.2 L520.5,149.0 L520.2,139.8 L521.2,164.4 L522.2,140.5 L523.0,140.7 L523.6,147.1 L524.0,140.0 L525.0,155.0 L526.0,140.4 L526.8,139.4 L527.4,144.1 L527.0,140.0 L528.0,166.6 L529.0,142.0 L529.8,140.0 L530.4,145.4 L531.0,140.0 L531.6,146.2 L531.5,141.1 L532.5,168.2 L533.5,142.1 L534.3,140.9 L534.9,149.9 L535.7,140.9 L536.3,148.8 L536.6,141.2 L537.2,147.1 L537.6,141.3 L538.6,162.9 L539.6,141.5 L540.4,140.4 L541.0,150.5 L541.3,141.3 L542.3,161.4 L543.3,141.9 L544.0,141.3 L545.0,159.8 L546.0,142.8 L546.8,142.3 L547.4,146.5 L547.0,141.4 L548.0,154.0 L549.0,142.5 L549.8,141.4 L550.4,146.0 L550.1,141.3 L551.1,164.4 L552.1,143.2 L552.9,141.6 L553.5,146.4 L554.0,142.4 L555.0,154.0 L556.0,142.4 L556.8,141.1 L557.4,146.2 L557.6,141.6 L558.6,159.8 L559.6,141.7 L560.4,141.3 L561.0,146.7 L561.0,142.4 L562.0,155.0 L563.0,143.1 L563.8,141.7 L564.4,147.8 L564.4,141.8 L565.4,165.9 L566.4,142.3 L567.2,141.1 L567.8,146.9 L568.0,141.5 L569.0,156.0 L570.0,142.7 L570.8,142.1 L571.4,150.8 L571.8,141.6 L572.4,146.8 L572.7,142.0 L573.7,172.0 L574.7,143.7 L575.5,142.5 L576.1,150.9 L576.4,141.2 L577.0,149.9 L577.0,142.1 L578.0,158.0 L579.0,143.0 L579.8,141.2 L580.4,147.9 L581.0,142.6 L582.0,172.7 L583.0,143.6 L583.8,142.9 L584.4,147.0 L584.0,141.8 L585.0,158.0 L586.0,143.0 L586.8,142.4 L587.4,151.6 L588.1,142.4 L588.7,150.4 L588.5,142.4 L589.5,172.0 L590.5,142.1 L591.3,142.7 L591.9,147.1 L592.7,142.6 L593.3,147.6 L593.6,142.0 L594.2,149.8 L594.6,142.1 L595.6,172.0 L596.6,142.5 L597.4,142.6 L598.0,149.7 L598.0,142.4 L599.0,160.0 L600.0,143.7 L600.8,142.0 L601.4,151.9 L601.4,143.6 L602.4,168.2 L603.4,144.0 L604.2,143.6 L604.8,154.0 L605.2,142.8 L606.2,168.2 L607.2,144.9 L608.0,143.5 L608.6,152.3 L608.9,144.2 L609.5,157.4 L610.0,145.1 L611.0,144.4 L612.0,143.7 L613.0,143.0 L614.0,142.5 L615.0,142.3 L616.0,142.1 L617.0,142.0 L618.0,141.8 L619.0,141.7 L620.0,141.5 L621.0,141.4 L622.0,141.2 L623.0,141.1 L624.0,140.9 L625.0,140.8 L626.0,140.6 L627.0,140.5 L628.0,140.3 L629.0,140.2 L630.0,140.0 L631.0,139.8 L632.0,139.7 L633.0,139.5" stroke="#48EC38" stroke-width="1.9" fill="none" stroke-linejoin="round"/>
<rect x="123.5" y="383.7" width="509.5" height="2.4" fill="#E42828"/>
<rect x="123" y="397" width="512" height="10" fill="#EFEEE6"/>
<rect x="123" y="397" width="510.5" height="1.6" fill="#FFFFFF"/>
<rect x="123" y="406" width="512" height="1.3" fill="#A9A692"/>
<rect x="123" y="397" width="10.5" height="9.5" fill="#F6F5F0"/>
<rect x="132.8" y="397" width="0.9" height="10.300000000000011" fill="#6E6C60"/>
<rect x="123" y="406.3" width="10.599999999999994" height="1.0" fill="#7E7C70"/>
<path d="M126.0,402.0 L129.3,399.7 L129.3,404.3 Z" fill="#000"/>
<rect x="623.2" y="397" width="0.9" height="10.300000000000011" fill="#6E6C60"/>
<rect x="624.1" y="397" width="9.9" height="9.5" fill="#F6F5F0"/>
<rect x="633.9" y="397" width="0.9" height="10.300000000000011" fill="#6E6C60"/>
<rect x="623.2" y="406.3" width="11.599999999999909" height="1.0" fill="#7E7C70"/>
<path d="M630.4,402.0 L627.6,399.7 L627.6,404.3 Z" fill="#000"/>
<text x="121.70" y="417.70" font-size="6.4" fill="#000" textLength="11.60" lengthAdjust="spacingAndGlyphs" stroke="#000" stroke-width="0.16">0:00</text>
<text x="121.70" y="426.50" font-size="6.4" fill="#000" textLength="3.40" lengthAdjust="spacingAndGlyphs" stroke="#000" stroke-width="0.16">0</text>
<text x="147.32" y="417.70" font-size="6.4" fill="#000" textLength="11.60" lengthAdjust="spacingAndGlyphs" stroke="#000" stroke-width="0.16">0:28</text>
<text x="147.32" y="426.50" font-size="6.4" fill="#000" textLength="6.60" lengthAdjust="spacingAndGlyphs" stroke="#000" stroke-width="0.16">42</text>
<text x="172.94" y="417.70" font-size="6.4" fill="#000" textLength="11.60" lengthAdjust="spacingAndGlyphs" stroke="#000" stroke-width="0.16">0:55</text>
<text x="172.94" y="426.50" font-size="6.4" fill="#000" textLength="9.80" lengthAdjust="spacingAndGlyphs" stroke="#000" stroke-width="0.16">184</text>
<text x="198.56" y="417.70" font-size="6.4" fill="#000" textLength="11.60" lengthAdjust="spacingAndGlyphs" stroke="#000" stroke-width="0.16">1:23</text>
<text x="198.56" y="426.50" font-size="6.4" fill="#000" textLength="9.80" lengthAdjust="spacingAndGlyphs" stroke="#000" stroke-width="0.16">333</text>
<text x="224.18" y="417.70" font-size="6.4" fill="#000" textLength="11.60" lengthAdjust="spacingAndGlyphs" stroke="#000" stroke-width="0.16">1:51</text>
<text x="224.18" y="426.50" font-size="6.4" fill="#000" textLength="9.80" lengthAdjust="spacingAndGlyphs" stroke="#000" stroke-width="0.16">498</text>
<text x="249.80" y="417.70" font-size="6.4" fill="#000" textLength="11.60" lengthAdjust="spacingAndGlyphs" stroke="#000" stroke-width="0.16">2:18</text>
<text x="249.80" y="426.50" font-size="6.4" fill="#000" textLength="9.80" lengthAdjust="spacingAndGlyphs" stroke="#000" stroke-width="0.16">630</text>
<text x="275.42" y="417.70" font-size="6.4" fill="#000" textLength="11.60" lengthAdjust="spacingAndGlyphs" stroke="#000" stroke-width="0.16">2:46</text>
<text x="275.42" y="426.50" font-size="6.4" fill="#000" textLength="9.80" lengthAdjust="spacingAndGlyphs" stroke="#000" stroke-width="0.16">697</text>
<text x="301.04" y="417.70" font-size="6.4" fill="#000" textLength="11.60" lengthAdjust="spacingAndGlyphs" stroke="#000" stroke-width="0.16">3:14</text>
<text x="301.04" y="426.50" font-size="6.4" fill="#000" textLength="9.80" lengthAdjust="spacingAndGlyphs" stroke="#000" stroke-width="0.16">744</text>
<text x="326.66" y="417.70" font-size="6.4" fill="#000" textLength="11.60" lengthAdjust="spacingAndGlyphs" stroke="#000" stroke-width="0.16">3:42</text>
<text x="326.66" y="426.50" font-size="6.4" fill="#000" textLength="9.80" lengthAdjust="spacingAndGlyphs" stroke="#000" stroke-width="0.16">859</text>
<text x="352.28" y="417.70" font-size="6.4" fill="#000" textLength="11.60" lengthAdjust="spacingAndGlyphs" stroke="#000" stroke-width="0.16">4:09</text>
<text x="352.28" y="426.50" font-size="6.4" fill="#000" textLength="9.80" lengthAdjust="spacingAndGlyphs" stroke="#000" stroke-width="0.16">883</text>
<text x="377.90" y="417.70" font-size="6.4" fill="#000" textLength="11.60" lengthAdjust="spacingAndGlyphs" stroke="#000" stroke-width="0.16">4:37</text>
<text x="377.90" y="426.50" font-size="6.4" fill="#000" textLength="13.00" lengthAdjust="spacingAndGlyphs" stroke="#000" stroke-width="0.16">1044</text>
<text x="403.52" y="417.70" font-size="6.4" fill="#000" textLength="11.60" lengthAdjust="spacingAndGlyphs" stroke="#000" stroke-width="0.16">5:05</text>
<text x="403.52" y="426.50" font-size="6.4" fill="#000" textLength="13.00" lengthAdjust="spacingAndGlyphs" stroke="#000" stroke-width="0.16">1197</text>
<text x="429.14" y="417.70" font-size="6.4" fill="#000" textLength="11.60" lengthAdjust="spacingAndGlyphs" stroke="#000" stroke-width="0.16">5:32</text>
<text x="429.14" y="426.50" font-size="6.4" fill="#000" textLength="13.00" lengthAdjust="spacingAndGlyphs" stroke="#000" stroke-width="0.16">1348</text>
<text x="454.76" y="417.70" font-size="6.4" fill="#000" textLength="11.60" lengthAdjust="spacingAndGlyphs" stroke="#000" stroke-width="0.16">6:00</text>
<text x="454.76" y="426.50" font-size="6.4" fill="#000" textLength="13.00" lengthAdjust="spacingAndGlyphs" stroke="#000" stroke-width="0.16">1516</text>
<text x="480.38" y="417.70" font-size="6.4" fill="#000" textLength="11.60" lengthAdjust="spacingAndGlyphs" stroke="#000" stroke-width="0.16">6:28</text>
<text x="480.38" y="426.50" font-size="6.4" fill="#000" textLength="13.00" lengthAdjust="spacingAndGlyphs" stroke="#000" stroke-width="0.16">1653</text>
<text x="506.00" y="417.70" font-size="6.4" fill="#000" textLength="11.60" lengthAdjust="spacingAndGlyphs" stroke="#000" stroke-width="0.16">6:55</text>
<text x="506.00" y="426.50" font-size="6.4" fill="#000" textLength="13.00" lengthAdjust="spacingAndGlyphs" stroke="#000" stroke-width="0.16">1821</text>
<text x="531.62" y="417.70" font-size="6.4" fill="#000" textLength="11.60" lengthAdjust="spacingAndGlyphs" stroke="#000" stroke-width="0.16">7:23</text>
<text x="531.62" y="426.50" font-size="6.4" fill="#000" textLength="13.00" lengthAdjust="spacingAndGlyphs" stroke="#000" stroke-width="0.16">1959</text>
<text x="557.24" y="417.70" font-size="6.4" fill="#000" textLength="11.60" lengthAdjust="spacingAndGlyphs" stroke="#000" stroke-width="0.16">7:51</text>
<text x="557.24" y="426.50" font-size="6.4" fill="#000" textLength="13.00" lengthAdjust="spacingAndGlyphs" stroke="#000" stroke-width="0.16">2126</text>
<text x="582.86" y="417.70" font-size="6.4" fill="#000" textLength="11.60" lengthAdjust="spacingAndGlyphs" stroke="#000" stroke-width="0.16">8:18</text>
<text x="582.86" y="426.50" font-size="6.4" fill="#000" textLength="13.00" lengthAdjust="spacingAndGlyphs" stroke="#000" stroke-width="0.16">2279</text>
<text x="608.48" y="417.70" font-size="6.4" fill="#000" textLength="11.60" lengthAdjust="spacingAndGlyphs" stroke="#000" stroke-width="0.16">8:46</text>
<text x="608.48" y="426.50" font-size="6.4" fill="#000" textLength="13.00" lengthAdjust="spacingAndGlyphs" stroke="#000" stroke-width="0.16">2461</text>
<text x="95.00" y="417.70" font-size="6.4" fill="#000" textLength="12.80" lengthAdjust="spacingAndGlyphs" stroke="#000" stroke-width="0.16">Time</text>
<text x="95.00" y="426.60" font-size="6.4" fill="#000" textLength="18.90" lengthAdjust="spacingAndGlyphs" stroke="#000" stroke-width="0.16">Charge</text>
<text x="95.00" y="435.80" font-size="6.4" fill="#000" textLength="17.60" lengthAdjust="spacingAndGlyphs" stroke="#000" stroke-width="0.16">(mAh)</text>
<text x="176.80" y="452.20" font-size="7.8" fill="#2B2B9E" textLength="84.70" lengthAdjust="spacingAndGlyphs" stroke="#2B2B9E" stroke-width="0.16">www.bnbproducts.com</text>
<rect x="177" y="452.8" width="84.5" height="0.9" fill="#2B2B9E"/>
<text x="329.40" y="452.40" font-size="7.8" fill="#2B2B9E" textLength="102.90" lengthAdjust="spacingAndGlyphs" stroke="#2B2B9E" stroke-width="0.16">support@bnbproducts.com</text>
<rect x="329.5" y="453.0" width="102.5" height="0.9" fill="#2B2B9E"/>
<text x="477.40" y="450.20" font-size="6.0" fill="#000" textLength="100.90" lengthAdjust="spacingAndGlyphs" stroke="#000" stroke-width="0.16">Copyright ® 2005 - 2007, BNB Products</text>
<rect x="0" y="462" width="640" height="1" fill="#CFCBB8"/>
<rect x="96" y="456" width="544" height="1" fill="#F2F0E6"/>
</svg>
</body></html>
